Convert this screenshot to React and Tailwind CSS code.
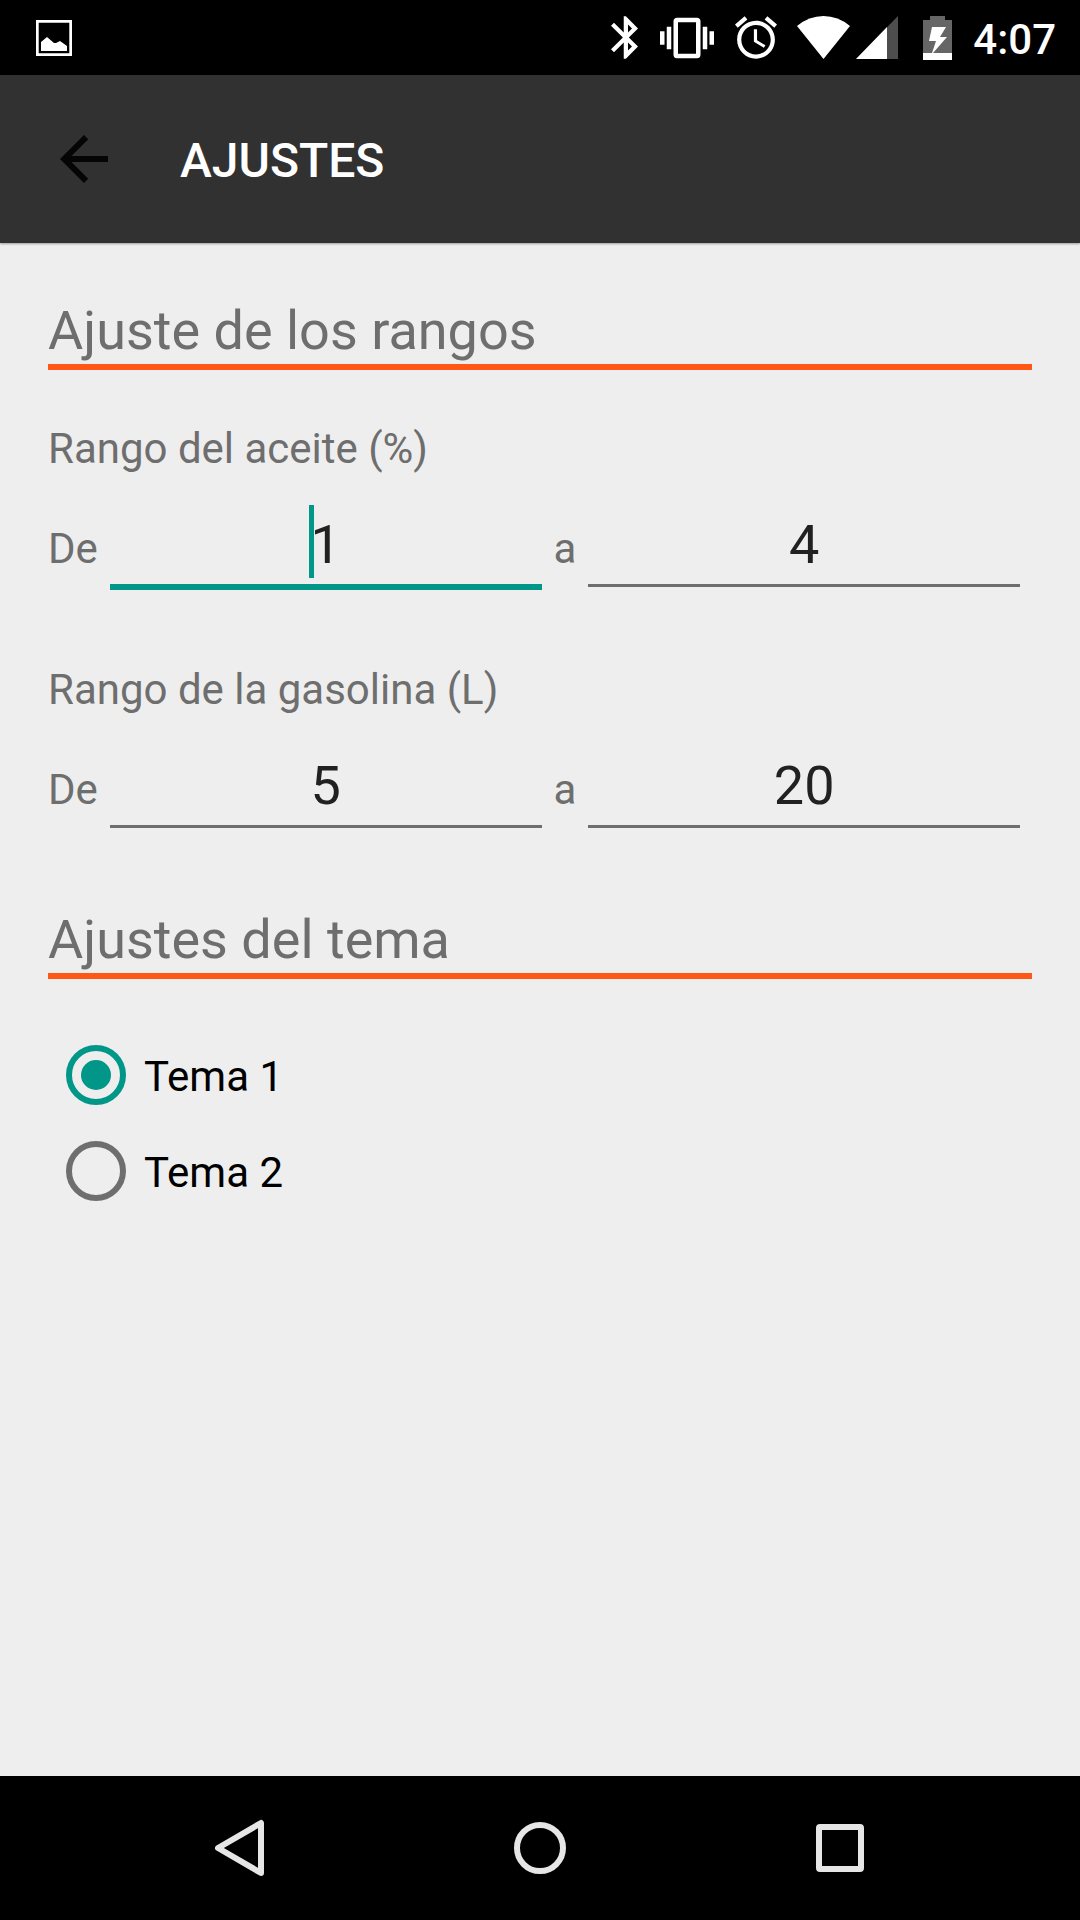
import { useState } from "react";

function StatusBar() {
  return (
    <div className="flex h-[75px] items-center bg-black pr-6 pl-9 text-white">
      <svg className="h-9 w-9" viewBox="0 0 36 36" fill="currentColor" aria-hidden="true">
        <path d="M0 0H36V36H0ZM2.700 2.700V33.300H33.300V2.700Z" fillRule="evenodd" />
        <path d="M5 31V22L11 17L18 23H20L24 21L31 26V31Z" />
      </svg>
      <div className="ml-auto flex items-center">
        <svg className="h-[43px] w-[27px]" viewBox="5 2 12.71 20" fill="currentColor" aria-hidden="true">
          <path d="M17.71 7.71L12 2h-1v7.59L6.41 5 5 6.41 10.59 12 5 17.59 6.41 19 11 14.41V22h1l5.71-5.71-4.3-4.29 4.3-4.29zM13 5.83l1.88 1.88L13 9.59V5.83zm1.88 10.46L13 18.17v-3.76l1.88 1.88z" />
        </svg>
        <svg className="ml-[22px] h-[54px] w-[54px]" viewBox="0 0 24 24" fill="currentColor" aria-hidden="true">
          <path d="M0 15h2V9H0v6zm3 2h2V7H3v10zm19-8v6h2V9h-2zm-3 8h2V7h-2v10zM16.5 3h-9C6.67 3 6 3.67 6 4.5v15c0 .83.67 1.5 1.5 1.5h9c.83 0 1.5-.67 1.5-1.5v-15c0-.83-.67-1.5-1.5-1.5zM16 19H8V5h8v14z" />
        </svg>
        <svg className="ml-[21px] h-[43px] w-[42px]" viewBox="2 1.86 20 20.14" fill="currentColor" aria-hidden="true">
          <path d="M22 5.72l-4.6-3.86-1.29 1.53 4.6 3.86L22 5.72zM7.88 3.39L6.6 1.86 2 5.71l1.29 1.53 4.59-3.85zM12.5 8H11v6l4.75 2.85.75-1.23-4-2.37V8zM12 4c-4.97 0-9 4.03-9 9s4.02 9 9 9c4.97 0 9-4.03 9-9s-4.03-9-9-9zm0 16c-3.87 0-7-3.13-7-7s3.13-7 7-7 7 3.13 7 7-3.13 7-7 7z" />
        </svg>
        <svg className="ml-5 h-[43px] w-[53px]" viewBox="0 0 53 43" fill="currentColor" aria-hidden="true">
          <path d="M26.5 43L0 10Q12 0 26.5 0T53 10Z" />
        </svg>
        <svg className="ml-[6px] h-[43px] w-[42px]" viewBox="0 0 42 43" aria-hidden="true">
          <path d="M0 43L42 0V43Z" fill="#4d4d4d" />
          <path d="M0 43L31 11V43Z" fill="currentColor" />
        </svg>
        <svg className="ml-[25px] h-11 w-[29px]" viewBox="0 0 29 44" aria-hidden="true">
          <path d="M7 0H22V4H29V37H0V4H7Z" fill="#666666" />
          <path d="M0 37H9L13 25H6L9 11H23L17 21H24L10 37H29V44H0Z" fill="currentColor" />
        </svg>
        <span className="ml-[21px] pt-1 text-[42px] leading-[50px] font-medium">4:07</span>
      </div>
    </div>
  );
}

function AppBar() {
  return (
    <header className="flex h-[168px] items-center bg-[#313131] px-12 shadow-[0_1px_2px_rgba(0,0,0,0.35)]">
      <button type="button" aria-label="Volver" className="text-[#050505]">
        <svg className="size-[72px]" viewBox="0 0 24 24" fill="currentColor" aria-hidden="true">
          <path d="M20 11H7.83l5.59-5.59L12 4l-8 8 8 8 1.41-1.41L7.83 13H20v-2z" />
        </svg>
      </button>
      <h1 className="ml-[60px] pt-1 text-[48px] leading-[56px] font-medium text-white">AJUSTES</h1>
    </header>
  );
}

function SectionTitle({ children }) {
  return (
    <h2 className="border-b-[6px] border-[#ff5714] text-[54px] leading-[66px] text-[#6e6e6e]">{children}</h2>
  );
}

function NumberField({ id, value, onChange, focused }) {
  return (
    <div className="relative mx-3 h-[77px] min-w-0 flex-1">
      <input
        id={id}
        type="text"
        inputMode="numeric"
        value={value}
        onChange={(e) => onChange(e.target.value)}
        className={
          focused
            ? "block h-[77px] w-full border-b-[6px] border-[#009688] bg-transparent pb-[9px] text-center text-[54px] leading-[62px] text-[#212121] outline-none"
            : "block h-[74px] w-full border-b-[3px] border-[#6e6e6e] bg-transparent pb-[9px] text-center text-[54px] leading-[62px] text-[#212121] outline-none"
        }
      />
      {focused && (
        <span className="absolute -top-2 left-[calc(50%-17px)] h-[73px] w-[5px] bg-[#009688]" aria-hidden="true" />
      )}
    </div>
  );
}

function RangeGroup({ id, title, from, to, focused }) {
  const [min, setMin] = useState(from);
  const [max, setMax] = useState(to);
  return (
    <fieldset className="text-[42px] leading-[50px] text-[#6e6e6e]">
      <legend>{title}</legend>
      <div className="mt-[39px] flex items-baseline">
        <label htmlFor={id + "-min"}>De</label>
        <NumberField id={id + "-min"} value={min} onChange={setMin} focused={focused} />
        <label htmlFor={id + "-max"}>a</label>
        <NumberField id={id + "-max"} value={max} onChange={setMax} />
      </div>
    </fieldset>
  );
}

function ThemeOption({ label, checked, onSelect }) {
  return (
    <label className="flex h-24 items-center gap-[18px] self-start text-[42px] leading-[50px] text-black">
      <input
        type="radio"
        name="tema"
        checked={checked}
        onChange={onSelect}
        className="grid size-[60px] appearance-none place-content-center rounded-full border-[6px] border-[#6e6e6e] checked:border-[#009688] checked:before:size-[30px] checked:before:rounded-full checked:before:bg-[#009688] checked:before:content-['']"
      />
      <span className="pt-1">{label}</span>
    </label>
  );
}

function NavigationBar() {
  return (
    <nav className="flex h-36 bg-black px-[90px] text-[#e6e6e6]">
      <button type="button" aria-label="Atrás" className="flex flex-1 items-center justify-center">
        <svg className="size-[60px]" viewBox="0 0 60 60" fill="none" stroke="currentColor" strokeWidth="6" strokeLinejoin="round" aria-hidden="true">
          <path d="M8 30L51 5V55Z" />
        </svg>
      </button>
      <button type="button" aria-label="Inicio" className="flex flex-1 items-center justify-center">
        <svg className="size-[60px]" viewBox="0 0 60 60" fill="none" stroke="currentColor" strokeWidth="6" aria-hidden="true">
          <circle cx="30" cy="30" r="23" />
        </svg>
      </button>
      <button type="button" aria-label="Recientes" className="flex flex-1 items-center justify-center">
        <svg className="size-[60px]" viewBox="0 0 60 60" fill="none" stroke="currentColor" strokeWidth="6" strokeLinejoin="round" aria-hidden="true">
          <rect x="9" y="9" width="42" height="42" rx="1" />
        </svg>
      </button>
    </nav>
  );
}

export default function App() {
  const [theme, setTheme] = useState("Tema 1");
  return (
    <div className="flex min-h-screen flex-col bg-[#eeeeee] font-[Roboto,sans-serif]">
      <StatusBar />
      <AppBar />
      <main className="flex flex-1 flex-col px-12 pt-[55px] pb-12">
        <SectionTitle>Ajuste de los rangos</SectionTitle>
        <div className="mt-[54px] mb-[76px] flex flex-col gap-[75px]">
          <RangeGroup id="aceite" title="Rango del aceite (%)" from="1" to="4" focused />
          <RangeGroup id="gasolina" title="Rango de la gasolina (L)" from="5" to="20" />
        </div>
        <SectionTitle>Ajustes del tema</SectionTitle>
        <div role="radiogroup" aria-label="Tema" className="mt-12 flex flex-col pl-[18px]">
          {["Tema 1", "Tema 2"].map((name) => (
            <ThemeOption key={name} label={name} checked={theme === name} onSelect={() => setTheme(name)} />
          ))}
        </div>
      </main>
      <NavigationBar />
    </div>
  );
}
